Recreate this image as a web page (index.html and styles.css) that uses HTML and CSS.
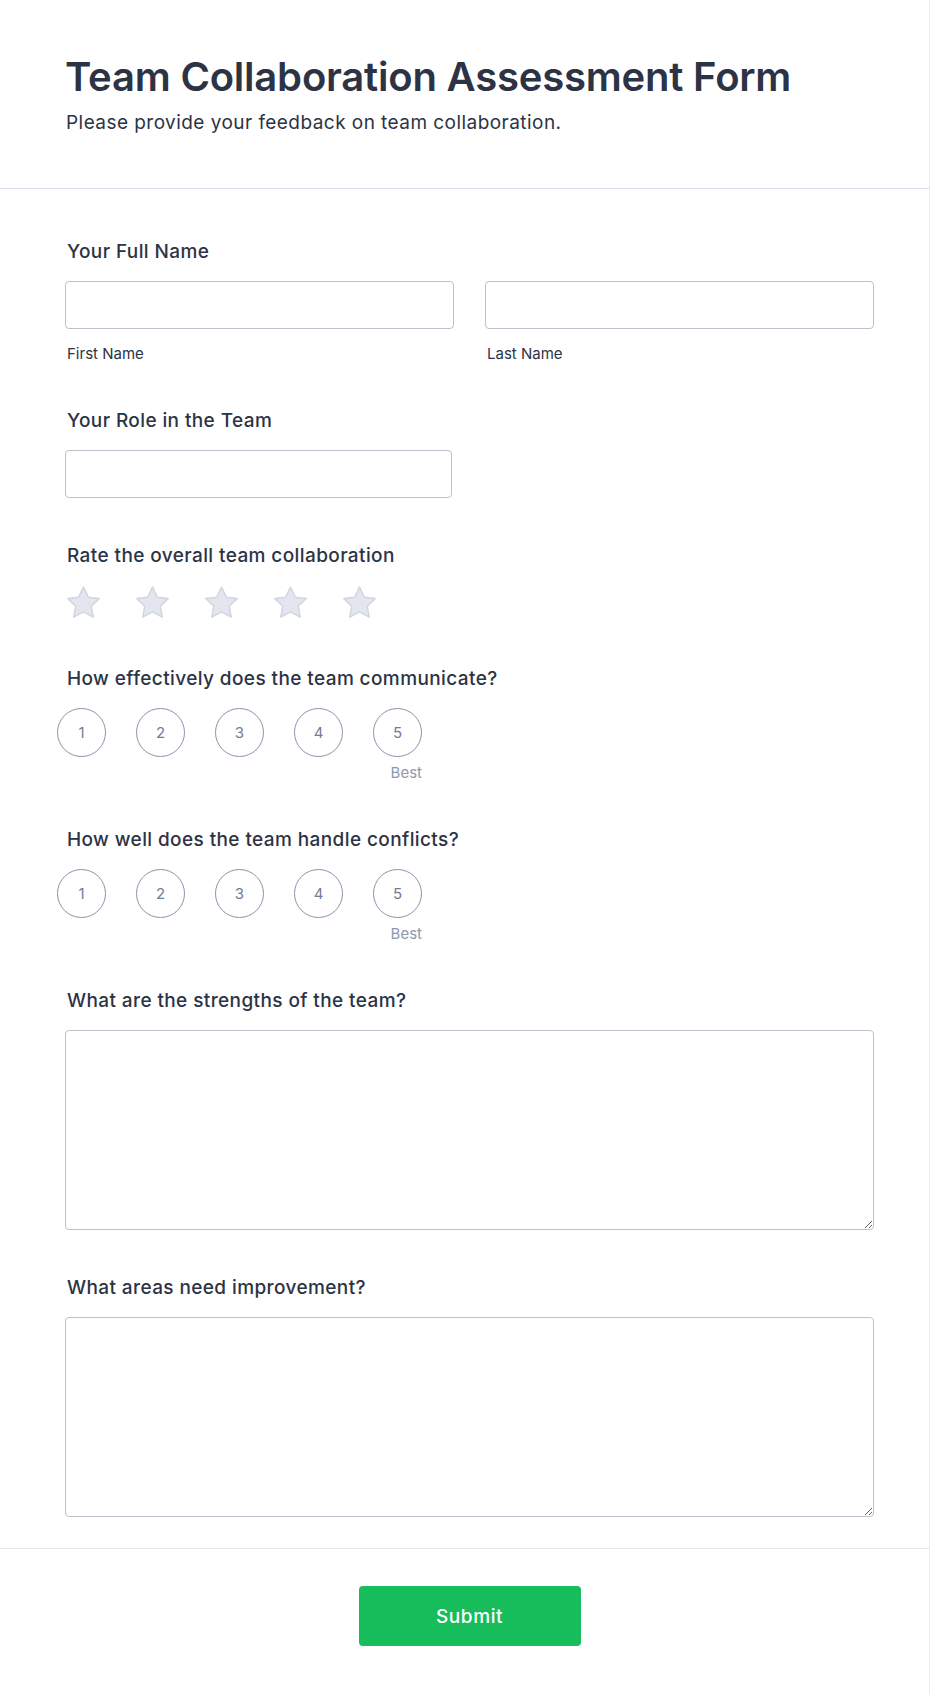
FILE: index.html
```html
<!DOCTYPE html>
<html lang="en">
<head>
<meta charset="utf-8">
<title>Team Collaboration Assessment Form</title>
<link rel="stylesheet" href="styles.css">
</head>
<body>
<div class="page">
  <header class="form-header">
    <h1 class="form-title">Team Collaboration Assessment Form</h1>
    <p class="form-subtitle">Please provide your feedback on team collaboration.</p>
  </header>

  <main class="form-body">
    <div class="field field-first">
      <label class="field-label">Your Full Name</label>
      <div class="name-row">
        <div class="name-col">
          <input class="text-input" type="text">
          <span class="sublabel">First Name</span>
        </div>
        <div class="name-col">
          <input class="text-input" type="text">
          <span class="sublabel">Last Name</span>
        </div>
      </div>
    </div>

    <div class="field">
      <label class="field-label">Your Role in the Team</label>
      <input class="text-input role-input" type="text">
    </div>

    <div class="field">
      <label class="field-label">Rate the overall team collaboration</label>
      <div class="stars">
        <svg class="star" viewBox="0 0 38 36"><path d="M19 2.2l4.9 10.3 11.2 1.5-8.2 7.8 2.1 11.2L19 27.6 9 33l2.1-11.2-8.2-7.8 11.2-1.5z"/></svg>
        <svg class="star" viewBox="0 0 38 36"><path d="M19 2.2l4.9 10.3 11.2 1.5-8.2 7.8 2.1 11.2L19 27.6 9 33l2.1-11.2-8.2-7.8 11.2-1.5z"/></svg>
        <svg class="star" viewBox="0 0 38 36"><path d="M19 2.2l4.9 10.3 11.2 1.5-8.2 7.8 2.1 11.2L19 27.6 9 33l2.1-11.2-8.2-7.8 11.2-1.5z"/></svg>
        <svg class="star" viewBox="0 0 38 36"><path d="M19 2.2l4.9 10.3 11.2 1.5-8.2 7.8 2.1 11.2L19 27.6 9 33l2.1-11.2-8.2-7.8 11.2-1.5z"/></svg>
        <svg class="star" viewBox="0 0 38 36"><path d="M19 2.2l4.9 10.3 11.2 1.5-8.2 7.8 2.1 11.2L19 27.6 9 33l2.1-11.2-8.2-7.8 11.2-1.5z"/></svg>
      </div>
    </div>

    <div class="field">
      <label class="field-label">How effectively does the team communicate?</label>
      <div class="scale">
        <div class="scale-row">
          <span class="scale-opt">1</span>
          <span class="scale-opt">2</span>
          <span class="scale-opt">3</span>
          <span class="scale-opt">4</span>
          <span class="scale-opt">5</span>
        </div>
        <div class="scale-best">Best</div>
      </div>
    </div>

    <div class="field">
      <label class="field-label">How well does the team handle conflicts?</label>
      <div class="scale">
        <div class="scale-row">
          <span class="scale-opt">1</span>
          <span class="scale-opt">2</span>
          <span class="scale-opt">3</span>
          <span class="scale-opt">4</span>
          <span class="scale-opt">5</span>
        </div>
        <div class="scale-best">Best</div>
      </div>
    </div>

    <div class="field">
      <label class="field-label">What are the strengths of the team?</label>
      <textarea class="text-area"></textarea>
    </div>

    <div class="field">
      <label class="field-label">What areas need improvement?</label>
      <textarea class="text-area"></textarea>
    </div>
  </main>

  <footer class="form-footer">
    <button class="submit-btn" type="button">Submit</button>
  </footer>
</div>
</body>
</html>
```

FILE: styles.css
```css
* { box-sizing: border-box; }

html, body {
  margin: 0;
  padding: 0;
  background: #ffffff;
}

body {
  font-family: Inter, "Noto Sans", "Liberation Sans", sans-serif;
  color: #2c3345;
}

.page {
  width: 930px;
  min-height: 1694px;
  border-right: 1px solid #ebebf2;
}

.form-header {
  padding: 53px 55px 53px 65px;
  border-bottom: 1px solid #dcdcec;
}

.form-title {
  margin: 0;
  font-size: 40px;
  line-height: 48px;
  font-weight: 600;
  letter-spacing: -0.2px;
  color: #2c3345;
}

.form-subtitle {
  margin: 10px 0 0 1px;
  font-size: 19px;
  line-height: 24px;
  font-weight: 400;
  letter-spacing: 0.45px;
  color: #2c3345;
}

.form-body {
  padding: 51px 55px 31px 65px;
}

.field {
  display: flex;
  flex-direction: column;
  margin-top: 46px;
}

.field-first { margin-top: 0; }

.field-label {
  display: block;
  margin: 0 0 17px 2px;
  font-size: 19px;
  line-height: 24px;
  font-weight: 500;
  letter-spacing: 0.4px;
  color: #2c3345;
}

.name-row {
  display: grid;
  grid-template-columns: 1fr 1fr;
  column-gap: 31px;
}

.name-col {
  display: flex;
  flex-direction: column;
}

.text-input {
  display: block;
  width: 100%;
  height: 48px;
  margin: 0;
  border: 1px solid #bcc1cc;
  border-radius: 4px;
  background: #ffffff;
  font-family: inherit;
  font-size: 16px;
  padding: 0 12px;
}

.role-input { width: 387px; }

.sublabel {
  display: block;
  margin: 16px 0 0 2px;
  font-size: 15px;
  line-height: 18px;
  color: #2c3345;
}

.stars {
  display: flex;
  gap: 32px;
  height: 36px;
}

.star {
  width: 37px;
  height: 35px;
  display: block;
}

.star path {
  fill: #e3e6ef;
  stroke: #d2d6e1;
  stroke-width: 1.6;
  stroke-linejoin: round;
}

.scale {
  display: inline-flex;
  flex-direction: column;
  align-self: flex-start;
  margin-left: -8px;
}

.scale-row {
  display: flex;
  gap: 30px;
}

.scale-opt {
  width: 49px;
  height: 49px;
  border: 1.5px solid #8a93aa;
  border-radius: 50%;
  display: flex;
  align-items: center;
  justify-content: center;
  font-size: 15px;
  color: #717c96;
}

.scale-best {
  margin-top: 7px;
  text-align: right;
  font-size: 15px;
  line-height: 18px;
  color: #8e98ae;
}

.text-area {
  display: block;
  width: 100%;
  height: 200px;
  margin: 0;
  border: 1px solid #bcc1cc;
  border-radius: 4px;
  background: #ffffff;
  font-family: inherit;
  font-size: 16px;
  padding: 10px 12px;
  resize: vertical;
}

.form-footer {
  border-top: 1px solid #e4e4ef;
  padding: 37px 55px 0 65px;
  display: flex;
  justify-content: center;
}

.submit-btn {
  width: 222px;
  height: 60px;
  border: none;
  border-radius: 4px;
  background: #18bd5b;
  color: #ffffff;
  font-family: inherit;
  font-size: 19px;
  font-weight: 500;
  letter-spacing: 0.6px;
  cursor: pointer;
}
```
